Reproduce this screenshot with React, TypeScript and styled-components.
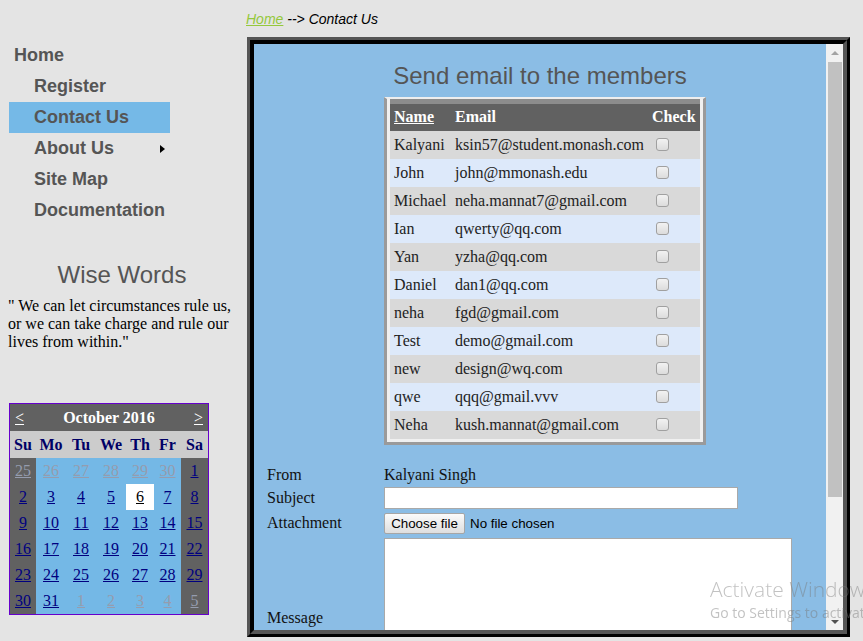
import React from 'react';
import styled, { createGlobalStyle } from 'styled-components';

const Global = createGlobalStyle`
  html, body { margin: 0; padding: 0; background: #e4e4e4; }
  body { font-family: "Liberation Serif", "Times New Roman", serif; overflow: hidden; }
`;

const Page = styled.div`
  display: flex;
  width: 863px;
  height: 641px;
  overflow: hidden;
`;

const Sidebar = styled.aside`
  width: 244px;
  flex: none;
  padding-top: 40px;
  box-sizing: border-box;
  display: flex;
  flex-direction: column;
`;

const Nav = styled.nav`
  margin-left: 9px;
  width: 161px;
  display: flex;
  flex-direction: column;
`;

const NavItem = styled.a<{ $sub?: boolean; $active?: boolean }>`
  display: flex;
  align-items: center;
  justify-content: space-between;
  height: 31px;
  padding-left: ${(p) => (p.$sub ? 25 : 5)}px;
  padding-right: 5px;
  font: bold 18px "Liberation Sans", Arial, sans-serif;
  color: #555;
  text-decoration: none;
  background: ${(p) => (p.$active ? '#75b9e7' : 'transparent')};
`;

const Arrow = styled.span`
  width: 0;
  height: 0;
  border-left: 5px solid #000;
  border-top: 4px solid transparent;
  border-bottom: 4px solid transparent;
`;

const WiseTitle = styled.h2`
  margin: 35px 0 0;
  font: normal 24px/28px "Liberation Sans", Arial, sans-serif;
  color: #555;
  text-align: center;
`;

const Quote = styled.p`
  margin: 8px 0 0;
  padding: 0 4px 0 8px;
  font: 16px/18px "Liberation Serif", "Times New Roman", serif;
  color: #000;
`;

const Calendar = styled.div`
  margin: 52px 0 0 9px;
  width: 200px;
  border: 1px solid #6600cc;
  box-sizing: border-box;
  display: grid;
  grid-template-columns: 26px 30px 30px 30px 28px 27px 27px;
  font: 16px "Liberation Serif", "Times New Roman", serif;
`;

const CalHeader = styled.div`
  grid-column: 1 / -1;
  height: 27px;
  background: #616161;
  display: flex;
  align-items: center;
  justify-content: space-between;
  padding: 0 5px;
  color: #fff;
  font-weight: bold;
`;

const CalNav = styled.a`
  color: #fff;
  text-decoration: underline;
  font-weight: normal;
`;

const WeekDay = styled.div`
  height: 27px;
  line-height: 27px;
  background: #cccccc;
  color: #000066;
  font-weight: bold;
  text-align: center;
`;

const DayCell = styled.div<{ $weekend: boolean; $today?: boolean }>`
  height: 26px;
  line-height: 26px;
  text-align: center;
  background: ${(p) => (p.$today ? '#ffffff' : p.$weekend ? '#616161' : '#74b8e6')};
`;

const DayLink = styled.a<{ $other?: boolean; $today?: boolean }>`
  color: ${(p) => (p.$today ? '#000' : p.$other ? '#959cae' : '#000080')};
  text-decoration: underline;
`;

const Main = styled.main`
  flex: 1;
  display: flex;
  flex-direction: column;
`;

const Crumb = styled.div`
  padding: 11px 0 0 2px;
  font: italic 14px/16px "Liberation Sans", Arial, sans-serif;
  color: #000;
`;

const CrumbLink = styled.a`
  color: #94c83c;
  text-decoration: underline;
`;

const Frame = styled.div`
  margin: 10px 0 0 3px;
  width: 603px;
  height: 600px;
  box-sizing: border-box;
  border: 3px solid;
  border-color: #555 #000 #000 #555;
`;

const FrameInner = styled.div`
  height: 100%;
  box-sizing: border-box;
  border: 4px solid;
  border-color: #000 #555 #555 #000;
  display: flex;
`;

const Content = styled.div`
  flex: 1;
  background: #8bbde5;
  overflow: hidden;
`;

const Title = styled.h1`
  margin: 18px 0 0;
  font: normal 24px/28px "Liberation Sans", Arial, sans-serif;
  color: #555;
  text-align: center;
`;

const FormGrid = styled.div`
  display: grid;
  grid-template-columns: 117px 1fr;
  padding: 7px 0 0 13px;
  font: 16px/20px "Liberation Serif", "Times New Roman", serif;
  color: #111;
`;

const TableBox = styled.div`
  grid-column: 2;
  justify-self: start;
  background: #f0f0f0;
  border: 3px solid #9a9a9a;
  border-top: 2px solid #eeeeee;
  padding: 0 3px 3px;
  margin-bottom: 20px;
`;

const MemberTable = styled.table`
  border-collapse: collapse;
  table-layout: fixed;
  width: 310px;
  font: 16px "Liberation Serif", "Times New Roman", serif;
`;

const HeadCell = styled.th<{ $w: number }>`
  width: ${(p) => p.$w}px;
  height: 29px;
  padding: 0 4px;
  background: #616161;
  border-top: 5px solid #8c8c8c;
  color: #fff;
  font-weight: bold;
  text-align: left;
  box-sizing: border-box;
`;

const HeadLink = styled.a`
  color: #fff;
  text-decoration: underline;
`;

const Row = styled.tr<{ $alt: boolean }>`
  background: ${(p) => (p.$alt ? '#dde9fa' : '#d9d9d9')};
`;

const Cell = styled.td`
  height: 28px;
  padding: 0 4px;
  color: #222;
  white-space: nowrap;
`;

const Check = styled.input`
  appearance: none;
  width: 13px;
  height: 13px;
  margin: 3px 3px 3px 4px;
  border: 1px solid #a0a0a0;
  border-radius: 3px;
  background: linear-gradient(#f2f2f2, #dcdcdc);
  vertical-align: middle;
  box-sizing: border-box;
`;

const Label = styled.div<{ $bottom?: boolean }>`
  grid-column: 1;
  align-self: ${(p) => (p.$bottom ? 'end' : 'center')};
  margin-bottom: ${(p) => (p.$bottom ? '10px' : '0')};
`;

const Value = styled.div<{ $h: number }>`
  grid-column: 2;
  min-height: ${(p) => p.$h}px;
  display: flex;
  align-items: center;
`;

const TextInput = styled.input`
  width: 354px;
  height: 22px;
  box-sizing: border-box;
  border: 1px solid #a9a9a9;
  background: #fff;
  margin: 0;
`;

const FileButton = styled.button`
  height: 21px;
  width: 81px;
  padding: 0;
  font: 13.33px "Liberation Sans", Arial, sans-serif;
  color: #000;
  border: 1px solid #a6a6a6;
  border-radius: 2px;
  background: linear-gradient(#fbfbfb, #dedede);
`;

const FileText = styled.span`
  margin-left: 5px;
  font: 13.33px "Liberation Sans", Arial, sans-serif;
  color: #000;
`;

const MessageArea = styled.textarea`
  width: 408px;
  height: 100px;
  margin: 2px 0 0;
  box-sizing: border-box;
  border: 1px solid #a9a9a9;
  background: #fff;
  resize: none;
`;

const ScrollBar = styled.div`
  width: 17px;
  flex: none;
  background: #f1f1f1;
  display: flex;
  flex-direction: column;
`;

const ScrollButton = styled.div`
  height: 17px;
  display: flex;
  align-items: center;
  justify-content: center;
`;

const TriUp = styled.span`
  width: 0;
  height: 0;
  border-left: 4px solid transparent;
  border-right: 4px solid transparent;
  border-bottom: 4px solid #a3a3a3;
`;

const TriDown = styled.span`
  width: 0;
  height: 0;
  border-left: 4px solid transparent;
  border-right: 4px solid transparent;
  border-top: 4px solid #505050;
`;

const Track = styled.div`
  flex: 1;
  padding: 1px 1px 0 2px;
`;

const Thumb = styled.div`
  height: 435px;
  background: #c1c1c1;
`;

const Watermark = styled.div`
  position: fixed;
  left: 710px;
  top: 576px;
  color: rgba(120, 120, 120, 0.45);
  font-family: "Open Sans", "Noto Sans", sans-serif;
  white-space: nowrap;
  pointer-events: none;
`;

const WmBig = styled.div`
  font-size: 21px;
  font-weight: 300;
  line-height: 27px;
`;

const WmSmall = styled.div`
  font-size: 14px;
  line-height: 20px;
`;

const members: [string, string][] = [
  ['Kalyani', 'ksin57@student.monash.com'],
  ['John', 'john@mmonash.edu'],
  ['Michael', 'neha.mannat7@gmail.com'],
  ['Ian', 'qwerty@qq.com'],
  ['Yan', 'yzha@qq.com'],
  ['Daniel', 'dan1@qq.com'],
  ['neha', 'fgd@gmail.com'],
  ['Test', 'demo@gmail.com'],
  ['new', 'design@wq.com'],
  ['qwe', 'qqq@gmail.vvv'],
  ['Neha', 'kush.mannat@gmail.com'],
];

type Day = { d: number; o?: boolean; t?: boolean };
const weeks: Day[][] = [
  [{ d: 25, o: true }, { d: 26, o: true }, { d: 27, o: true }, { d: 28, o: true }, { d: 29, o: true }, { d: 30, o: true }, { d: 1 }],
  [{ d: 2 }, { d: 3 }, { d: 4 }, { d: 5 }, { d: 6, t: true }, { d: 7 }, { d: 8 }],
  [9, 10, 11, 12, 13, 14, 15].map((d) => ({ d })),
  [16, 17, 18, 19, 20, 21, 22].map((d) => ({ d })),
  [23, 24, 25, 26, 27, 28, 29].map((d) => ({ d })),
  [{ d: 30 }, { d: 31 }, { d: 1, o: true }, { d: 2, o: true }, { d: 3, o: true }, { d: 4, o: true }, { d: 5, o: true }],
];

const weekdays = ['Su', 'Mo', 'Tu', 'We', 'Th', 'Fr', 'Sa'];

export default function App() {
  return (
    <>
      <Global />
      <Page>
        <Sidebar>
          <Nav>
            <NavItem>Home</NavItem>
            <NavItem $sub>Register</NavItem>
            <NavItem $sub $active>Contact Us</NavItem>
            <NavItem $sub>
              About Us
              <Arrow />
            </NavItem>
            <NavItem $sub>Site Map</NavItem>
            <NavItem $sub>Documentation</NavItem>
          </Nav>
          <WiseTitle>Wise Words</WiseTitle>
          <Quote>" We can let circumstances rule us, or we can take charge and rule our lives from within."</Quote>
          <Calendar>
            <CalHeader>
              <CalNav>&lt;</CalNav>
              <span>October 2016</span>
              <CalNav>&gt;</CalNav>
            </CalHeader>
            {weekdays.map((w) => (
              <WeekDay key={w}>{w}</WeekDay>
            ))}
            {weeks.map((week, wi) =>
              week.map((day, di) => (
                <DayCell key={`${wi}-${di}`} $weekend={di === 0 || di === 6} $today={day.t}>
                  <DayLink $other={day.o} $today={day.t}>{day.d}</DayLink>
                </DayCell>
              ))
            )}
          </Calendar>
        </Sidebar>
        <Main>
          <Crumb>
            <CrumbLink>Home</CrumbLink> --&gt; Contact Us
          </Crumb>
          <Frame>
            <FrameInner>
              <Content>
                <Title>Send email to the members</Title>
                <FormGrid>
                  <TableBox>
                    <MemberTable>
                      <thead>
                        <tr>
                          <HeadCell $w={61}><HeadLink>Name</HeadLink></HeadCell>
                          <HeadCell $w={197}>Email</HeadCell>
                          <HeadCell $w={52}>Check</HeadCell>
                        </tr>
                      </thead>
                      <tbody>
                        {members.map(([n, e], i) => (
                          <Row key={i} $alt={i % 2 === 1}>
                            <Cell>{n}</Cell>
                            <Cell>{e}</Cell>
                            <Cell><Check type="checkbox" /></Cell>
                          </Row>
                        ))}
                      </tbody>
                    </MemberTable>
                  </TableBox>
                  <Label>From</Label>
                  <Value $h={20}>Kalyani Singh</Value>
                  <Label>Subject</Label>
                  <Value $h={26}><TextInput type="text" /></Value>
                  <Label>Attachment</Label>
                  <Value $h={25}>
                    <FileButton type="button">Choose file</FileButton>
                    <FileText>No file chosen</FileText>
                  </Value>
                  <Label $bottom>Message</Label>
                  <Value $h={102}><MessageArea /></Value>
                </FormGrid>
              </Content>
              <ScrollBar>
                <ScrollButton><TriUp /></ScrollButton>
                <Track><Thumb /></Track>
                <ScrollButton><TriDown /></ScrollButton>
              </ScrollBar>
            </FrameInner>
          </Frame>
        </Main>
      </Page>
      <Watermark>
        <WmBig>Activate Windows</WmBig>
        <WmSmall>Go to Settings to activate Windows.</WmSmall>
      </Watermark>
    </>
  );
}
